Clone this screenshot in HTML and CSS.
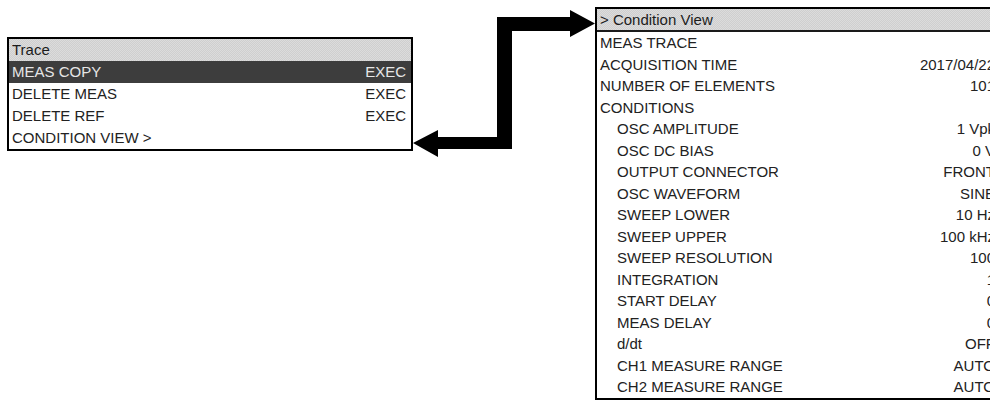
FILE: index.html
```html
<!DOCTYPE html>
<html>
<head>
<meta charset="utf-8">
<link rel="stylesheet" href="styles.css">
</head>
<body>
<div class="stage">
  <div class="menu">
    <div class="title">Trace</div>
    <div class="row selected"><span>MEAS COPY</span><span>EXEC</span></div>
    <div class="row"><span>DELETE MEAS</span><span>EXEC</span></div>
    <div class="row"><span>DELETE REF</span><span>EXEC</span></div>
    <div class="row"><span>CONDITION VIEW &gt;</span><span></span></div>
  </div>
  <div class="view">
    <div class="title">&gt; Condition View</div>
    <div class="vrow"><span>MEAS TRACE</span><span></span></div>
    <div class="vrow"><span>ACQUISITION TIME</span><span>2017/04/22</span></div>
    <div class="vrow"><span>NUMBER OF ELEMENTS</span><span>101</span></div>
    <div class="vrow"><span>CONDITIONS</span><span></span></div>
    <div class="vrow sub"><span>OSC AMPLITUDE</span><span>1 Vpk</span></div>
    <div class="vrow sub"><span>OSC DC BIAS</span><span>0 V</span></div>
    <div class="vrow sub"><span>OUTPUT CONNECTOR</span><span>FRONT</span></div>
    <div class="vrow sub"><span>OSC WAVEFORM</span><span>SINE</span></div>
    <div class="vrow sub"><span>SWEEP LOWER</span><span>10 Hz</span></div>
    <div class="vrow sub"><span>SWEEP UPPER</span><span>100 kHz</span></div>
    <div class="vrow sub"><span>SWEEP RESOLUTION</span><span>100</span></div>
    <div class="vrow sub"><span>INTEGRATION</span><span>1</span></div>
    <div class="vrow sub"><span>START DELAY</span><span>0</span></div>
    <div class="vrow sub"><span>MEAS DELAY</span><span>0</span></div>
    <div class="vrow sub"><span>d/dt</span><span>OFF</span></div>
    <div class="vrow sub"><span>CH1 MEASURE RANGE</span><span>AUTO</span></div>
    <div class="vrow sub"><span>CH2 MEASURE RANGE</span><span>AUTO</span></div>
  </div>
  <svg class="arrow" width="990" height="408" viewBox="0 0 990 408">
    <polygon fill="#000" points="413,143 438,130 438,137 497,137 497,17 570,17 570,10 595,23.5 570,37 570,31 512,31 512,149 438,149 438,157"/>
  </svg>
</div>
</body>
</html>
```

FILE: styles.css
```css
html, body {
  margin: 0;
  padding: 0;
  background: #fff;
}
body {
  width: 990px;
  height: 408px;
  overflow: hidden;
  font-family: "Liberation Sans", Arial, sans-serif;
  font-size: 15px;
  color: #222;
}
.stage {
  position: relative;
  width: 990px;
  height: 408px;
  display: flex;
  align-items: flex-start;
  gap: 182px;
  padding-left: 7px;
  box-sizing: border-box;
}
.menu {
  margin-top: 37px;
  width: 406px;
  flex: none;
  border: 2px solid #000;
  box-sizing: border-box;
}
.title {
  height: 22px;
  line-height: 22px;
  padding-left: 3px;
  background-color: #d6d6d6;
  background-image: repeating-conic-gradient(#cfcfcf 0 25%, #dcdcdc 0 50%);
  background-size: 2px 2px;
  color: #1c1c1c;
}
.menu .row {
  height: 22px;
  line-height: 22px;
  display: flex;
  justify-content: space-between;
  padding: 0 5px 0 3px;
}
.menu .row.selected {
  background: #3d3d3d;
  color: #e6e6e6;
}
.view {
  margin-top: 7px;
  width: 412px;
  flex: none;
  border: 2px solid #000;
  box-sizing: border-box;
}
.view .title {
  height: 21px;
  line-height: 21px;
  border-bottom: 2px solid #1a1a1a;
}
.vrow {
  height: 21.5px;
  line-height: 21.5px;
  display: flex;
  justify-content: space-between;
  padding: 0 10px 0 3px;
  white-space: nowrap;
}
.vrow.sub {
  padding-left: 20px;
}
.arrow {
  position: absolute;
  left: 0;
  top: 0;
}
```
